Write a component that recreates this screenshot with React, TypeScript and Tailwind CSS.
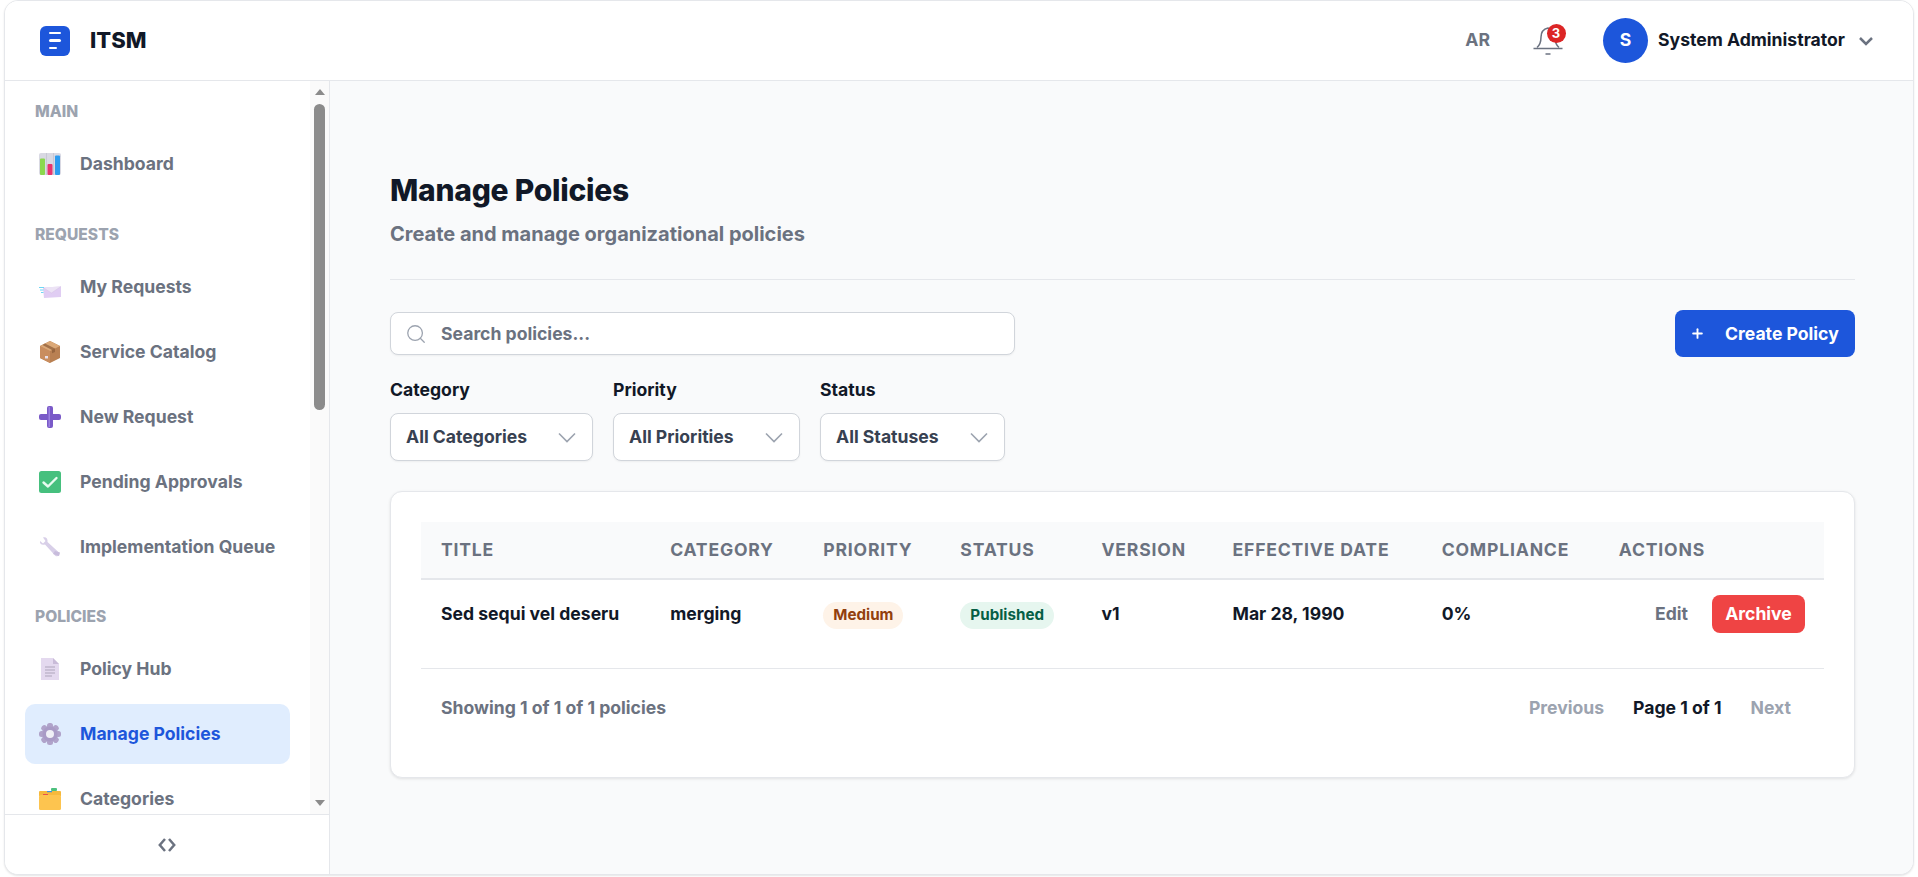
import React from "react";
import { Search, Plus } from "lucide-react";

const BarsIcon = () => (
  <svg width="22" height="22" viewBox="0 0 22 22"><rect width="22" height="22" rx="2" fill="#d9d9e3"/><path d="M7.500 0v22M14.500 0v22" stroke="#c4c4d0" strokeWidth="0.8"/><rect x="1" y="5.500" width="5" height="16.500" rx="1" fill="#8bd84e"/><rect x="8.500" y="11" width="5" height="11" rx="1" fill="#e8336d"/><rect x="16" y="2.500" width="5" height="19.500" rx="1" fill="#2c9cf0"/></svg>
);
const MailIcon = () => (
  <svg width="22" height="22" viewBox="0 0 22 22"><path d="M4 11.500L22 10.500V21L5 22z" fill="#e0cdf3"/><path d="M4 11.500l8.500 5.500L22 10.500" fill="#ece3f5" stroke="#d6c6e8" strokeWidth="0.6"/><path d="M0 11.500h5M1 14h3.500M2 16.500h2.500" stroke="#6ed6f5" strokeWidth="1"/></svg>
);
const BoxIcon = () => (
  <svg width="22" height="22" viewBox="0 0 22 22"><path d="M11 0l10 5v12l-10 5-10-5V5z" fill="#b98052"/><path d="M11 10v12l-10-5V5z" fill="#c98d5e"/><path d="M11 0l10 5-10 5L1 5z" fill="#dba877"/><path d="M6 2.500l10 5V11l-3 1.300V9L3.500 4z" fill="#8a5a36" opacity=".7"/><rect x="6" y="15" width="3" height="2.500" fill="#e8dfe8"/></svg>
);
const PlusIcon = () => (
  <svg width="22" height="22" viewBox="0 0 22 22"><rect x="8" y="0" width="6" height="22" rx="2" fill="#7a5ac8"/><rect x="0" y="8" width="22" height="6" rx="2" fill="#7a5ac8"/><rect x="9.500" y="1" width="1.500" height="20" fill="#9b80e0"/></svg>
);
const CheckIcon = () => (
  <svg width="22" height="22" viewBox="0 0 22 22"><rect width="22" height="22" rx="2.500" fill="#46c07e"/><path d="M4.500 11.500l4.500 4 8.500-8.500" fill="none" stroke="#e8fbf0" strokeWidth="2.400" strokeLinecap="round" strokeLinejoin="round"/></svg>
);
const WrenchIcon = () => (
  <svg width="22" height="22" viewBox="0 0 22 22"><path d="M1 5l3 2.500L6.500 5 4 1.500C6.800.4 9 2.500 8.500 6L20 16.500c1.200 3-1 4.500-3.500 3.500L6 8.500C3 9.500.3 7.800 1 5z" fill="#d8cfe8"/><path d="M14 18l2-3 5 1.500-1 3.500z" fill="#c8bcdc"/></svg>
);
const DocIcon = () => (
  <svg width="22" height="22" viewBox="0 0 22 22"><path d="M2 0h12l6 6v16H2z" fill="#e4d9ef"/><path d="M14 0l6 6h-6z" fill="#c9bbd8"/><path d="M6 9h10M6 12h10M6 15h10M6 18h7" stroke="#a89fb5" strokeWidth="0.9"/></svg>
);
const GearIcon = () => (
  <svg width="22" height="22" viewBox="0 0 22 22"><g fill="#b0a3ca">{[0, 45, 90, 135, 180, 225, 270, 315].map((a) => (<rect key={a} x="8" y="0" width="6" height="6" rx="2.500" transform={`rotate(${a} 11 11)`} />))}</g><circle cx="11" cy="11" r="7.500" fill="#a99bc6"/><circle cx="11" cy="11" r="4" fill="#f0f0f6"/></svg>
);
const FolderIcon = () => (
  <svg width="22" height="22" viewBox="0 0 22 22"><rect x="12" y="0" width="6" height="3" rx="1" fill="#4cc07e"/><path d="M1 3h20a1 1 0 011 1v4H0V4a1 1 0 011-1z" fill="#f6b93c"/><rect x="8" y="3" width="5" height="1.200" fill="#3f8ee0"/><rect x="4" y="6" width="5" height="1.200" fill="#e85050"/><rect y="7" width="22" height="15" rx="1.500" fill="#fdc44f"/></svg>
);

const SelectChevron = () => (
  <svg width="18" height="11" viewBox="0 0 18 11" fill="none" stroke="#9ca3af" strokeWidth="1.6"><path d="M1 1.500l8 8 8-8" /></svg>
);

const Section = ({ label, mb, children }: { label: string; mb: string; children: React.ReactNode }) => (
  <div className={mb}>
    <div className="pl-[30px] text-[15.6px] leading-[20px] font-extrabold text-[#9ca3af] mb-[12px]">{label}</div>
    <div className="flex flex-col gap-[5px] pl-[20px] pr-[20px]">{children}</div>
  </div>
);

const Item = ({ icon, label, active }: { icon: React.ReactNode; label: string; active?: boolean }) => (
  <div className={`flex h-[60px] shrink-0 items-center gap-[19px] rounded-[10px] pl-[14px] text-[17.6px] ${active ? "bg-[#e0edfe] font-bold text-[#1d56db]" : "font-[650] text-[#6b7280]"}`}>
    <span className="flex h-[22px] w-[22px] shrink-0">{icon}</span>
    <span>{label}</span>
  </div>
);

const Select = ({ label, value, width }: { label: string; value: string; width: string }) => (
  <div className="flex flex-col gap-[11px]">
    <div className="text-[17.6px] leading-[24px] font-[650] text-[#111827]">{label}</div>
    <div className={`flex h-[48px] items-center justify-between rounded-[8px] border border-[#d1d5db] bg-white pl-[15px] pr-[16px] text-[17.6px] font-[650] text-[#374151] shadow-[0_1px_2px_rgba(0,0,0,0.05)] ${width}`}>
      <span>{value}</span>
      <SelectChevron />
    </div>
  </div>
);

const Th = ({ children }: { children: React.ReactNode }) => (
  <th className="px-[20px] text-left text-[17.6px] font-bold uppercase text-[#6b7280] tracking-[0.8px] whitespace-nowrap">{children}</th>
);
const Td = ({ children }: { children: React.ReactNode }) => (
  <td className="px-[20px] pt-[21px] align-top text-[17.6px] leading-[26px] font-[650] text-[#111827]">{children}</td>
);

export default function App() {
  return (
    <div className="h-[877px] w-[1918px] overflow-hidden bg-white pb-[2px] pl-[4px] pr-[4px] [font-family:Inter,sans-serif]">
      <div className="flex h-[875px] flex-col overflow-hidden rounded-[14px] border border-[#e5e7eb] bg-white shadow-[0_1px_2px_rgba(0,0,0,0.1)]">
        <header className="flex h-[80px] shrink-0 items-center justify-between border-b border-[#e5e7eb] bg-white pl-[35px] pr-[35px]">
          <div className="flex items-center gap-[20px]">
            <div className="flex h-[30px] w-[30px] flex-col items-start justify-center gap-[5px] rounded-[6px] bg-[#1d56db] pl-[9px]">
              <span className="h-[2.500px] w-[12px] rounded bg-white" />
              <span className="h-[2.500px] w-[12px] rounded bg-white" />
              <span className="h-[2.500px] w-[8px] rounded bg-white" />
            </div>
            <span className="text-[22px] font-extrabold text-[#111827]">ITSM</span>
          </div>
          <div className="flex items-center">
            <span className="mr-[43px] text-[17.6px] font-bold text-[#6b7280]">AR</span>
            <div className="relative mr-[40px] h-[30px] w-[30px]">
              <svg width="30" height="30" viewBox="0 0 30 30" fill="none" stroke="#6b7280" strokeWidth="1.500">
                <path d="M4 21.500C7 19 8 16 8 11C8 6 11 3 15 2C20 3 22 6 22 11C22 16 23 19 26 21.500" />
                <path d="M0.500 22.500H29.500" />
                <path d="M12.500 28H17.500" />
              </svg>
              <span className="absolute right-[-2.500px] top-[-1.500px] flex h-[19px] w-[19px] items-center justify-center rounded-full bg-[#dc2626] text-[13px] font-bold text-white">3</span>
            </div>
            <div className="flex h-[45px] w-[45px] items-center justify-center rounded-full bg-[#1d56db] text-[17.6px] font-bold text-white">S</div>
            <span className="ml-[10px] text-[17.6px] font-[650] text-[#111827]">System Administrator</span>
            <svg width="24" height="24" viewBox="0 0 24 24" fill="none" stroke="#6b7280" strokeWidth="2.500" className="ml-[9px]"><path d="M6 9l6 6 6-6" /></svg>
          </div>
        </header>
        <div className="flex min-h-0 flex-1">
          <aside className="flex w-[325px] shrink-0 flex-col border-r border-[#e5e7eb] bg-white">
            <div className="flex min-h-0 flex-1">
              <nav className="min-w-0 flex-1 overflow-hidden pt-[21px]">
                <Section label="MAIN" mb="mb-[31px]">
                  <Item icon={<BarsIcon />} label="Dashboard" />
                </Section>
                <Section label="REQUESTS" mb="mb-[30px]">
                  <Item icon={<MailIcon />} label="My Requests" />
                  <Item icon={<BoxIcon />} label="Service Catalog" />
                  <Item icon={<PlusIcon />} label="New Request" />
                  <Item icon={<CheckIcon />} label="Pending Approvals" />
                  <Item icon={<WrenchIcon />} label="Implementation Queue" />
                </Section>
                <Section label="POLICIES" mb="mb-[32px]">
                  <Item icon={<DocIcon />} label="Policy Hub" />
                  <Item icon={<GearIcon />} label="Manage Policies" active />
                  <Item icon={<FolderIcon />} label="Categories" />
                </Section>
              </nav>
              <div className="flex w-[19px] shrink-0 flex-col items-center bg-[#fafafa]">
                <div className="mt-[8px] h-0 w-0 border-x-[5px] border-b-[6px] border-x-transparent border-b-[#8b8b8b]" />
                <div className="mt-[9px] h-[306px] w-[11px] rounded-full bg-[#8b8b8b]" />
                <div className="mt-auto mb-[8px] h-0 w-0 border-x-[5px] border-t-[6px] border-x-transparent border-t-[#8b8b8b]" />
              </div>
            </div>
            <div className="flex h-[60px] shrink-0 items-center justify-center border-t border-[#e5e7eb] pr-[1px]">
              <svg width="18" height="14" viewBox="0 0 18 14" fill="none" stroke="#6b7280" strokeWidth="2.500"><path d="M7 1L1.800 7L7 13M11 1L16.200 7L11 13" /></svg>
            </div>
          </aside>
          <main className="min-w-0 flex-1 bg-[#f9fafb] pl-[60px] pr-[58px] pt-[91px]">
            <div className="border-b border-[#e5e7eb] pb-[31px]">
              <h1 className="text-[30px] leading-[36px] font-extrabold tracking-[-0.25px] text-[#111827]">Manage Policies</h1>
              <p className="mt-[12px] text-[20px] leading-[28px] font-[650] text-[#6b7280]">Create and manage organizational policies</p>
            </div>
            <div className="mt-[30px] flex items-center justify-between">
              <div className="flex h-[43px] w-[625px] items-center gap-[14px] rounded-[8px] border border-[#d1d5db] bg-white pl-[14px] shadow-[0_1px_2px_rgba(0,0,0,0.05)]">
                <Search size={22} strokeWidth={1.4} className="text-[#9ca3af]" />
                <span className="pt-[2px] text-[17.6px] font-[650] text-[#6b7280]">Search policies...</span>
              </div>
              <div className="flex h-[47px] w-[180px] items-center gap-[20px] rounded-[8px] bg-[#1d56db] pl-[15px] text-[17.6px] font-[650] text-white">
                <Plus size={15} strokeWidth={3} />
                <span className="pt-[2px]">Create Policy</span>
              </div>
            </div>
            <div className="mt-[21px] flex gap-[20px]">
              <Select label="Category" value="All Categories" width="w-[203px]" />
              <Select label="Priority" value="All Priorities" width="w-[187px]" />
              <Select label="Status" value="All Statuses" width="w-[185px]" />
            </div>
            <div className="mt-[30px] h-[287px] rounded-[12px] border border-[#e5e7eb] bg-white px-[30px] pt-[30px] shadow-[0_1px_3px_rgba(0,0,0,0.1)]">
              <table className="w-full table-fixed border-collapse">
                <colgroup>
                  <col className="w-[229px]" />
                  <col className="w-[153px]" />
                  <col className="w-[137px]" />
                  <col className="w-[141px]" />
                  <col className="w-[131px]" />
                  <col className="w-[209px]" />
                  <col className="w-[177px]" />
                  <col className="w-[225px]" />
                </colgroup>
                <thead>
                  <tr className="h-[57px] border-b-2 border-[#e5e7eb] bg-[#f9fafb]">
                    <Th>Title</Th><Th>Category</Th><Th>Priority</Th><Th>Status</Th><Th>Version</Th><Th>Effective Date</Th><Th>Compliance</Th><Th>Actions</Th>
                  </tr>
                </thead>
                <tbody>
                  <tr className="h-[89px] border-b border-[#e5e7eb]">
                    <Td>Sed sequi vel deseru</Td>
                    <Td>merging</Td>
                    <Td><span className="inline-flex h-[27px] items-center rounded-full bg-[#fef3e8] px-[10px] text-[15.2px] font-[650] text-[#92400e]">Medium</span></Td>
                    <Td><span className="inline-flex h-[27px] items-center rounded-full bg-[#e6f6ef] px-[10px] text-[15.2px] font-[650] text-[#065f46]">Published</span></Td>
                    <Td>v1</Td>
                    <Td>Mar 28, 1990</Td>
                    <Td>0%</Td>
                    <td className="pr-[19px] pt-[15px] align-top text-[17.6px]">
                      <div className="flex items-center justify-end gap-[24px] font-[650]">
                        <span className="text-[#6b7280]">Edit</span>
                        <span className="flex h-[38px] w-[93px] items-center justify-center rounded-[8px] bg-[#ef4444] text-white">Archive</span>
                      </div>
                    </td>
                  </tr>
                </tbody>
              </table>
              <div className="flex h-[79px] items-center justify-between pl-[20px] pr-[33px] text-[17.6px] font-[650]">
                <span className="text-[#6b7280]">Showing 1 of 1 of 1 policies</span>
                <div className="flex items-center gap-[29px]">
                  <span className="text-[#9ca3af]">Previous</span>
                  <span className="text-[#111827]">Page 1 of 1</span>
                  <span className="text-[#9ca3af]">Next</span>
                </div>
              </div>
            </div>
          </main>
        </div>
      </div>
    </div>
  );
}
